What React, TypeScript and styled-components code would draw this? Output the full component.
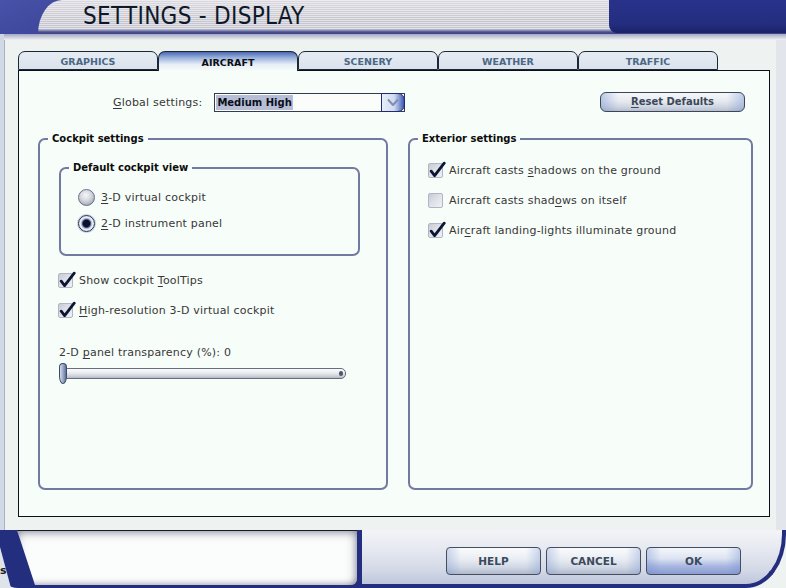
import React from "react";
import styled, { createGlobalStyle } from "styled-components";

const NAVY = "#242e7e";
const UI_FONT = `"DejaVu Sans", Verdana, sans-serif`;

const Global = createGlobalStyle`
  html, body { margin: 0; padding: 0; }
  body {
    width: 786px; height: 588px; overflow: hidden;
    background: #eef2f0;
    font-family: ${UI_FONT};
  }
  *, *::before, *::after { box-sizing: border-box; }
`;

const Window = styled.div`
  width: 786px;
  height: 588px;
  display: flex;
  flex-direction: column;
  overflow: hidden;
  background: #eef2f0;
`;

/* ---------- header ---------- */
const Header = styled.header`
  flex: none;
  height: 34px;
  display: flex;
  background: linear-gradient(155deg, #4852a8 0%, #2a3486 35%, #1f2874 70%, #2a348a 100%);
`;

const HeaderCorner = styled.div`
  flex: none;
  width: 38px;
`;

const TitleBar = styled.div`
  flex: 1;
  display: flex;
  border-top-left-radius: 24px 34px;
  background:
    linear-gradient(to bottom, transparent 0, transparent 29px, #9a9ec0 30px, #4a5090 32px, #3a4080 34px),
    linear-gradient(to bottom, rgba(255,255,255,0.35), rgba(255,255,255,0) 60%),
    repeating-linear-gradient(to bottom, #e2e2e8 0 1px, #c6c6ce 1px 2px);
`;

const Title = styled.h1`
  margin: 0;
  padding: 2px 0 0 45px;
  font-family: "DejaVu Sans Condensed", "DejaVu Sans", sans-serif;
  font-stretch: condensed;
  font-weight: normal;
  font-size: 24px;
  line-height: 29px;
  color: #0f1828;
  letter-spacing: 0.3px;
`;

const HeaderBlue = styled.div`
  flex: none;
  width: 177px;
  height: 33px;
  margin-left: auto;
  border-bottom-left-radius: 8px;
  background: linear-gradient(to bottom, #28328a 0, #242e80 70%, #1a2268 100%);
`;

const HeaderShadow = styled.div`
  flex: none;
  height: 6px;
  background:
    linear-gradient(to right, #cfd6e4 0 4px, transparent 4px),
    linear-gradient(to bottom, #a4a8c6, #eef2f0);
`;

/* ---------- body ---------- */
const Body = styled.main`
  flex: none;
  height: 490px;
  padding: 11px 16px 13px 18px;
  background:
    linear-gradient(to right, #d2d9e6 0 4px, #a8b0c2 4px 5px, transparent 5px),
    linear-gradient(to left, #e2e6ec 0 10px, transparent 10px),
    #eef2f0;
  display: flex;
  flex-direction: column;
`;

const TabRow = styled.nav`
  display: flex;
  height: 19px;
  position: relative;
  z-index: 1;
`;

const Tab = styled.div<{ $active?: boolean }>`
  width: 140px;
  height: ${(p) => (p.$active ? "20px" : "19px")};
  border: 1px solid #1b2838;
  border-bottom: ${(p) => (p.$active ? "none" : "1px solid #1b2838")};
  border-radius: 7px 7px 0 0;
  display: flex;
  align-items: center;
  justify-content: center;
  padding-top: 2px;
  font-family: ${UI_FONT};
  font-weight: bold;
  font-size: 9.5px;
  color: ${(p) => (p.$active ? "#0c0c10" : "#4a6786")};
  background: ${(p) =>
    p.$active
      ? "linear-gradient(to bottom, #4a68b0 0, #98b0dc 30%, #e6edf7 65%, #f7fdf8 100%)"
      : "linear-gradient(to bottom, #e6ecf3, #dbe2eb)"};
`;

const Panel = styled.section`
  height: 447px;
  border: 1px solid #0c1018;
  background: #f7fdf8;
  padding: 20px 17px 26px 19px;
  display: flex;
  flex-direction: column;
  gap: 21px;
`;

const TopRow = styled.div`
  height: 21px;
  display: flex;
  align-items: center;
  padding-left: 75px;
  padding-right: 7px;
`;

const FieldLabel = styled.label`
  font-size: 11px;
  color: #383838;
  letter-spacing: 0.2px;
  margin-right: 12px;
  margin-top: 2px;
`;

const Key = styled.span`
  text-decoration: underline;
  text-underline-offset: 2px;
`;

const Select = styled.div`
  width: 191px;
  height: 19px;
  margin-top: 2px;
  display: flex;
  border: 1px solid #343c52;
  background: #fbfdfb;
`;

const SelectValue = styled.div`
  flex: 1;
  display: flex;
  align-items: center;
  padding-left: 1px;
`;

const Highlight = styled.span`
  background: #b6bed6;
  font-weight: bold;
  font-size: 10px;
  line-height: 15px;
  color: #0a0e1c;
  padding: 0 1px;
`;

const SelectArrow = styled.div`
  width: 24px;
  margin: -1px -1px -1px 0;
  border: 1px solid #1e2c78;
  border-radius: 0 7px 7px 0;
  display: flex;
  align-items: center;
  justify-content: center;
  background: linear-gradient(to right, #e8edf6 0, #d2dbee 55%, #7088cc 85%, #3a54b0 100%);
`;

const ResetButton = styled.button`
  margin-left: auto;
  width: 145px;
  height: 20px;
  border: 1px solid #3e4656;
  border-radius: 6px;
  padding: 0;
  font-family: ${UI_FONT};
  font-weight: bold;
  font-size: 10px;
  color: #3a4758;
  background:
    linear-gradient(to right, rgba(120,150,210,0.45) 0, rgba(255,255,255,0) 12%, rgba(255,255,255,0) 88%, rgba(120,150,210,0.45) 100%),
    linear-gradient(to bottom, #f6f7fa 0, #e6eaf0 45%, #d0d6e2 75%, #b6bed0 100%);
`;

const Groups = styled.div`
  display: grid;
  grid-template-columns: 350px 345px;
  column-gap: 20px;
  height: 357px;
`;

const Group = styled.fieldset`
  margin: 0;
  padding: 0;
  min-width: 0;
  border: 2px solid #737aa2;
  border-radius: 7px;
`;

const Legend = styled.legend<{ $offset?: number }>`
  margin-left: ${(p) => p.$offset ?? 8}px;
  padding: 0 4px;
  font-weight: bold;
  font-size: 10px;
  line-height: 12px;
  color: #0c0c0c;
`;

const GroupBody = styled.div<{ $top: number; $left: number }>`
  padding: ${(p) => p.$top}px 0 0 ${(p) => p.$left}px;
  display: flex;
  flex-direction: column;
  align-items: flex-start;
`;

const SubGroup = styled(Group)`
  width: 301px;
  height: 94px;
  margin-left: 1px;
`;

const OptionList = styled.div<{ $gap: number; $top?: number }>`
  display: flex;
  flex-direction: column;
  gap: ${(p) => p.$gap}px;
  margin-top: ${(p) => p.$top ?? 0}px;
`;

const Option = styled.div`
  height: 17px;
  display: flex;
  align-items: center;
  gap: 6px;
  font-size: 11px;
  letter-spacing: 0.2px;
  color: #383838;
  white-space: nowrap;
`;

const Box = styled.span`
  position: relative;
  flex: none;
  width: 15px;
  height: 15px;
  border: 1px solid #b0b6c4;
  border-radius: 2px;
  background: linear-gradient(135deg, #c6cad4 0, #dfe2e8 50%, #f0f1f4 100%);
`;

const Tick = styled.svg`
  position: absolute;
  left: 0;
  top: -3px;
`;

const RadioDot = styled.span<{ $on?: boolean }>`
  flex: none;
  width: 17px;
  height: 17px;
  border-radius: 50%;
  border: 1px solid ${(p) => (p.$on ? "#283248" : "#687088")};
  background: ${(p) =>
    p.$on
      ? "radial-gradient(circle at 50% 50%, #0c1224 0 3.2px, #3a4a78 4px, #a6b6de 5px, #eef1f7 6.2px, #c4c8d4 100%)"
      : "radial-gradient(circle at 45% 35%, #f6f7f9 0, #d2d5dc 45%, #9ca2b0 85%, #7a8090 100%)"};
  box-shadow: ${(p) => (p.$on ? "0 0 0 1px rgba(150,170,220,0.5)" : "none")};
`;

const SliderBlock = styled.div`
  margin-top: 27px;
  display: flex;
  flex-direction: column;
  gap: 4px;
  margin-left: 1px;
`;

const SliderLabel = styled.div`
  font-size: 11px;
  line-height: 13px;
  letter-spacing: 0.2px;
  color: #383838;
`;

const SliderWrap = styled.div`
  position: relative;
  width: 287px;
  height: 21px;
  padding: 5px 0 0 2px;
`;

const Track = styled.div`
  position: relative;
  height: 11px;
  border: 1px solid #686e7c;
  border-radius: 2px 5px 5px 2px;
  background: linear-gradient(to bottom, #fbfbfc 0, #ebedf0 40%, #cdd0d8 80%, #b4b8c2 100%);
  &::after {
    content: "";
    position: absolute;
    right: 2px;
    top: 2px;
    width: 4px;
    height: 5px;
    border-radius: 2px;
    background: #505868;
  }
`;

const Thumb = styled.div`
  position: absolute;
  left: 0;
  top: 0;
  width: 8px;
  height: 21px;
  border: 1px solid #3c4a68;
  border-radius: 4px 4px 4px 4px / 4px 4px 8px 8px;
  background: linear-gradient(to right, #d4dcec 0, #9aaac8 50%, #5e7098 100%);
`;

/* ---------- footer ---------- */
const Footer = styled.footer`
  flex: none;
  height: 58px;
  display: flex;
`;

const FooterLeft = styled.div`
  flex: none;
  width: 362px;
  display: flex;
  background: ${NAVY};
  border-bottom-left-radius: 18px;
`;

const FooterStub = styled.div`
  flex: none;
  width: 17px;
  display: flex;
  align-items: flex-end;
  padding-bottom: 12px;
  background: #dfe3ea;
  clip-path: polygon(0 17px, 11px 100%, 0 100%);
  font-size: 11px;
  font-weight: bold;
  color: #202020;
  line-height: 10px;
  letter-spacing: -3px;
`;

const StatusBox = styled.div`
  flex: none;
  width: 340px;
  height: 55px;
  border-top: 1px solid #1a1a22;
  border-bottom-right-radius: 6px;
  background: #fbfdfc;
  box-shadow: inset 0 6px 8px -4px rgba(90, 90, 120, 0.55), inset -6px 0 8px -4px rgba(90, 90, 120, 0.5),
    inset 0 -4px 6px -3px rgba(90, 90, 120, 0.45), inset 8px 0 8px -6px rgba(90, 90, 120, 0.4);
  clip-path: polygon(0 0, 100% 0, 100% 100%, 18px 100%);
`;

const ButtonArea = styled.div`
  flex: 1;
  display: flex;
  justify-content: flex-end;
  align-items: flex-start;
  gap: 5px;
  padding: 17px 41px 0 0;
  border-right: 4px solid ${NAVY};
  border-bottom: 4px solid ${NAVY};
  border-bottom-right-radius: 40px 54px;
  background: linear-gradient(to bottom, #f2f4f7 0, #e6e9f0 35%, #d2d8e6 75%, #bec6dc 100%);
`;

const DialogButton = styled.button<{ $primary?: boolean }>`
  width: 95px;
  height: 28px;
  padding: 0;
  border: 1px solid #464e5e;
  border-radius: 4px;
  font-family: ${UI_FONT};
  font-weight: bold;
  font-size: 10.5px;
  color: #3c4a5c;
  background: ${(p) =>
    p.$primary
      ? "linear-gradient(to right, rgba(110,140,210,0.35), rgba(255,255,255,0) 15%, rgba(255,255,255,0) 85%, rgba(110,140,210,0.35)), linear-gradient(to bottom, #f4f6fa 0, #dde4f2 40%, #a8b6e0 70%, #8a9cd2 100%)"
      : "linear-gradient(to right, rgba(120,150,210,0.35), rgba(255,255,255,0) 15%, rgba(255,255,255,0) 85%, rgba(120,150,210,0.35)), linear-gradient(to bottom, #fafbfc 0, #e8ecf2 45%, #d0d7e4 75%, #b0bacd 100%)"};
`;

/* ---------- pieces ---------- */
const CheckBox: React.FC<{ checked?: boolean }> = ({ checked }) => (
  <Box>
    {checked && (
      <Tick width="17" height="18" viewBox="0 0 17 18">
        <path d="M2.2 10.2 L5.6 14.6 L15.2 2.2" fill="none" stroke="#0c1634" strokeWidth="2.8" strokeLinecap="round" strokeLinejoin="round" />
      </Tick>
    )}
  </Box>
);

const Check: React.FC<{ checked?: boolean; children: React.ReactNode }> = ({ checked, children }) => (
  <Option>
    <CheckBox checked={checked} />
    <span>{children}</span>
  </Option>
);

const Radio: React.FC<{ on?: boolean; children: React.ReactNode }> = ({ on, children }) => (
  <Option>
    <RadioDot $on={on} />
    <span>{children}</span>
  </Option>
);

const tabs = ["GRAPHICS", "AIRCRAFT", "SCENERY", "WEATHER", "TRAFFIC"];

export default function App() {
  return (
    <Window>
      <Global />
      <Header>
        <HeaderCorner />
        <TitleBar>
          <Title>SETTINGS - DISPLAY</Title>
          <HeaderBlue />
        </TitleBar>
      </Header>
      <HeaderShadow />
      <Body>
        <TabRow>
          {tabs.map((t) => (
            <Tab key={t} $active={t === "AIRCRAFT"}>
              {t}
            </Tab>
          ))}
        </TabRow>
        <Panel>
          <TopRow>
            <FieldLabel>
              <Key>G</Key>lobal settings:
            </FieldLabel>
            <Select>
              <SelectValue>
                <Highlight>Medium High</Highlight>
              </SelectValue>
              <SelectArrow>
                <svg width="12" height="9" viewBox="0 0 12 9">
                  <path d="M1 1.5 L6 7 L11 1.5" fill="none" stroke="#7d8fb8" strokeWidth="2" strokeLinejoin="round" />
                </svg>
              </SelectArrow>
            </Select>
            <ResetButton>
              <Key>R</Key>eset Defaults
            </ResetButton>
          </TopRow>
          <Groups>
            <Group>
              <Legend>Cockpit settings</Legend>
              <GroupBody $top={17} $left={18}>
                <SubGroup>
                  <Legend>Default cockpit view</Legend>
                  <GroupBody $top={15} $left={17}>
                    <OptionList $gap={9}>
                      <Radio>
                        <Key>3</Key>-D virtual cockpit
                      </Radio>
                      <Radio on>
                        <Key>2</Key>-D instrument panel
                      </Radio>
                    </OptionList>
                  </GroupBody>
                </SubGroup>
                <OptionList $gap={13} $top={16}>
                  <Check checked>
                    Show cockpit <Key>T</Key>oolTips
                  </Check>
                  <Check checked>
                    <Key>H</Key>igh-resolution 3-D virtual cockpit
                  </Check>
                </OptionList>
                <SliderBlock>
                  <SliderLabel>
                    2-D <Key>p</Key>anel transparency (%): 0
                  </SliderLabel>
                  <SliderWrap>
                    <Track />
                    <Thumb />
                  </SliderWrap>
                </SliderBlock>
              </GroupBody>
            </Group>
            <Group>
              <Legend $offset={8}>Exterior settings</Legend>
              <GroupBody $top={17} $left={18}>
                <OptionList $gap={13}>
                  <Check checked>
                    Aircraft casts <Key>s</Key>hadows on the ground
                  </Check>
                  <Check>
                    Aircraft casts shad<Key>o</Key>ws on itself
                  </Check>
                  <Check checked>
                    Air<Key>c</Key>raft landing-lights illuminate ground
                  </Check>
                </OptionList>
              </GroupBody>
            </Group>
          </Groups>
        </Panel>
      </Body>
      <Footer>
        <FooterLeft>
          <FooterStub>s</FooterStub>
          <StatusBox />
        </FooterLeft>
        <ButtonArea>
          <DialogButton>HELP</DialogButton>
          <DialogButton>CANCEL</DialogButton>
          <DialogButton $primary>OK</DialogButton>
        </ButtonArea>
      </Footer>
    </Window>
  );
}
